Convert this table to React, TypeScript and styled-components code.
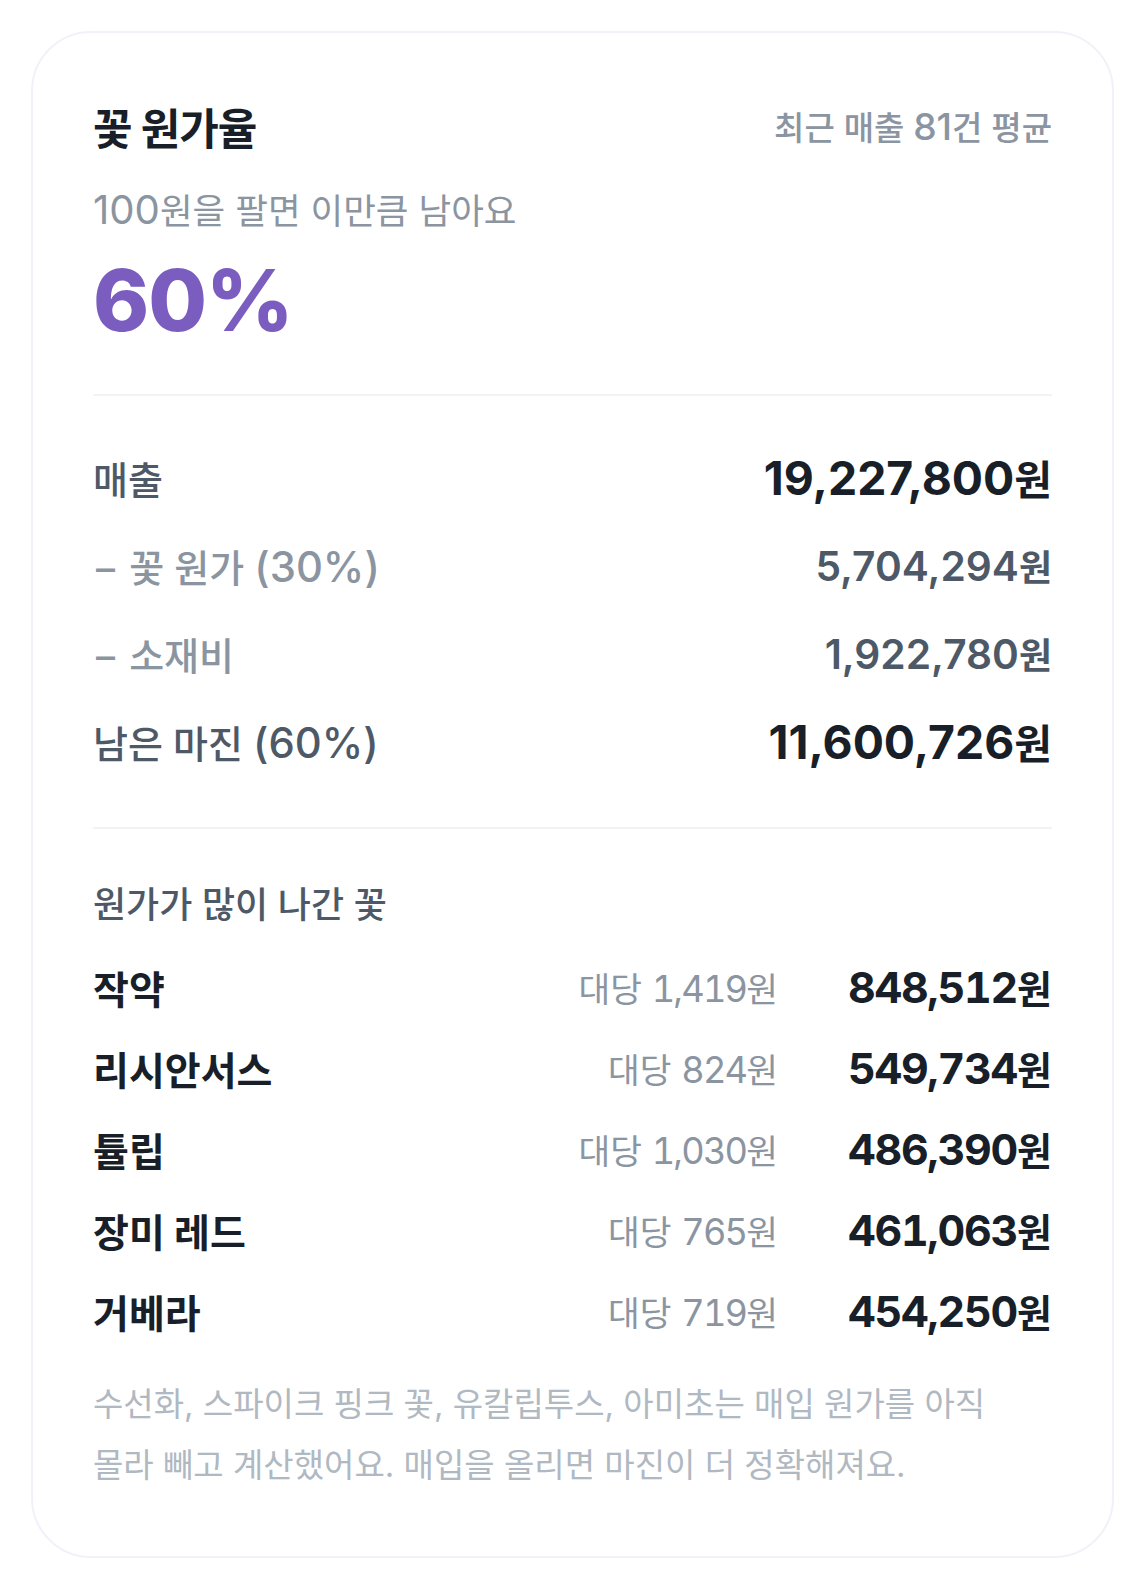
import React from "react";
import styled, { createGlobalStyle } from "styled-components";

const GlobalStyle = createGlobalStyle`
  html, body { margin: 0; padding: 0; background: #ffffff; }
  body {
    font-family: Inter, "Noto Sans CJK KR", sans-serif;
    -webkit-font-smoothing: antialiased;
  }
`;

const Page = styled.div`
  padding: 31px 32px 31px 31px;
`;

const Card = styled.section`
  background: #ffffff;
  border: 2px solid #f2f1fa;
  border-radius: 60px;
  padding: 60px 60px 60px 60px;
  display: flex;
  flex-direction: column;
`;

const Header = styled.header`
  display: flex;
  justify-content: space-between;
  align-items: center;
  height: 66px;
`;

const Title = styled.h2`
  margin: 0;
  font-size: 43px;
  font-weight: 700;
  letter-spacing: -1px;
  color: #191f28;
`;

const Meta = styled.span`
  font-size: 33px;
  font-weight: 500;
  color: #8b95a1;
`;

const Num = styled.span<{ $scale?: number; $tabular?: boolean; $track?: number }>`
  font-size: ${(p) => p.$scale ?? 1.13}em;
  line-height: 1;
  letter-spacing: ${(p) => p.$track ?? 0}em;
  font-variant-numeric: ${(p) => (p.$tabular ? "tabular-nums" : "normal")};
`;

const Subtitle = styled.p`
  margin: 30px 0 0;
  font-size: 35.5px;
  line-height: 46px;
  font-weight: 400;
  color: #8b95a1;
`;

const BigRate = styled.div`
  margin-top: 16px;
  font-size: 85px;
  line-height: 100px;
  font-weight: 800;
  letter-spacing: -1px;
  color: #7b5cbf;
`;

const Divider = styled.hr<{ $top: number }>`
  margin: ${(p) => p.$top}px 0 0;
  border: none;
  height: 2px;
  background: #f2f2f7;
`;

const Summary = styled.div`
  margin-top: 37px;
  display: flex;
  flex-direction: column;
`;

const SumRow = styled.div`
  height: 88px;
  display: flex;
  justify-content: space-between;
  align-items: center;
`;

const SumLabel = styled.span<{ $muted?: boolean }>`
  font-size: 38px;
  font-weight: 500;
  color: ${(p) => (p.$muted ? "#8b95a1" : "#4e5968")};
`;

const Dash = styled.span`
  display: inline-block;
  margin: 0 4px 0 3px;
`;

const SumValue = styled.span<{ $strong?: boolean }>`
  font-size: ${(p) => (p.$strong ? 41 : 36)}px;
  font-weight: ${(p) => (p.$strong ? 700 : 600)};
  color: ${(p) => (p.$strong ? "#191f28" : "#4e5968")};
`;

const SectionTitle = styled.h3`
  margin: 51px 0 0;
  font-size: 36px;
  line-height: 50px;
  font-weight: 500;
  color: #4e5968;
`;

const FlowerList = styled.div`
  margin-top: 16px;
  display: flex;
  flex-direction: column;
`;

const FlowerRow = styled.div`
  height: 81px;
  display: grid;
  grid-template-columns: 1fr auto 274px;
  align-items: center;
`;

const FlowerName = styled.span`
  font-size: 39px;
  font-weight: 700;
  color: #191f28;
`;

const PerUnit = styled.span`
  font-size: 34.5px;
  font-weight: 400;
  color: #8b95a1;
  text-align: right;
`;

const FlowerCost = styled.span`
  justify-self: end;
  font-size: 38px;
  font-weight: 700;
  color: #191f28;
`;

const Footnote = styled.p`
  margin: 23px 0 0;
  font-size: 33px;
  line-height: 61px;
  font-weight: 400;
  color: #b0b8c1;
`;

type SumItem = { label: React.ReactNode; value: string; muted?: boolean; strong?: boolean };

const summary: SumItem[] = [
  { label: "매출", value: "19,227,800", strong: true },
  { label: <><Dash>–</Dash> 꽃 원가 <Num $scale={1.1}>(30%)</Num></>, value: "5,704,294", muted: true },
  { label: <><Dash>–</Dash> 소재비</>, value: "1,922,780", muted: true },
  { label: <>남은 마진 <Num $scale={1.1}>(60%)</Num></>, value: "11,600,726", strong: true },
];

const flowers = [
  { name: "작약", per: "1,419", cost: "848,512" },
  { name: "리시안서스", per: "824", cost: "549,734" },
  { name: "튤립", per: "1,030", cost: "486,390" },
  { name: "장미 레드", per: "765", cost: "461,063" },
  { name: "거베라", per: "719", cost: "454,250" },
];

export default function App() {
  return (
    <>
      <GlobalStyle />
      <Page>
        <Card>
          <Header>
            <Title>꽃 원가율</Title>
            <Meta>
              최근 매출 <Num>81</Num>건 평균
            </Meta>
          </Header>
          <Subtitle>
            <Num>100</Num>원을 팔면 이만큼 남아요
          </Subtitle>
          <BigRate>60%</BigRate>
          <Divider $top={43} />
          <Summary>
            {summary.map((s, i) => (
              <SumRow key={i}>
                <SumLabel $muted={s.muted}>{s.label}</SumLabel>
                <SumValue $strong={s.strong}>
                  <Num>{s.value}</Num>원
                </SumValue>
              </SumRow>
            ))}
          </Summary>
          <Divider $top={42} />
          <SectionTitle>원가가 많이 나간 꽃</SectionTitle>
          <FlowerList>
            {flowers.map((f) => (
              <FlowerRow key={f.name}>
                <FlowerName>{f.name}</FlowerName>
                <PerUnit>
                  대당 <Num $scale={1.05} $tabular $track={-0.05}>{f.per}</Num>원
                </PerUnit>
                <FlowerCost>
                  <Num $tabular $track={-0.03}>{f.cost}</Num>원
                </FlowerCost>
              </FlowerRow>
            ))}
          </FlowerList>
          <Footnote>
            수선화, 스파이크 핑크 꽃, 유칼립투스, 아미초는 매입 원가를 아직
            <br />
            몰라 빼고 계산했어요. 매입을 올리면 마진이 더 정확해져요.
          </Footnote>
        </Card>
      </Page>
    </>
  );
}
